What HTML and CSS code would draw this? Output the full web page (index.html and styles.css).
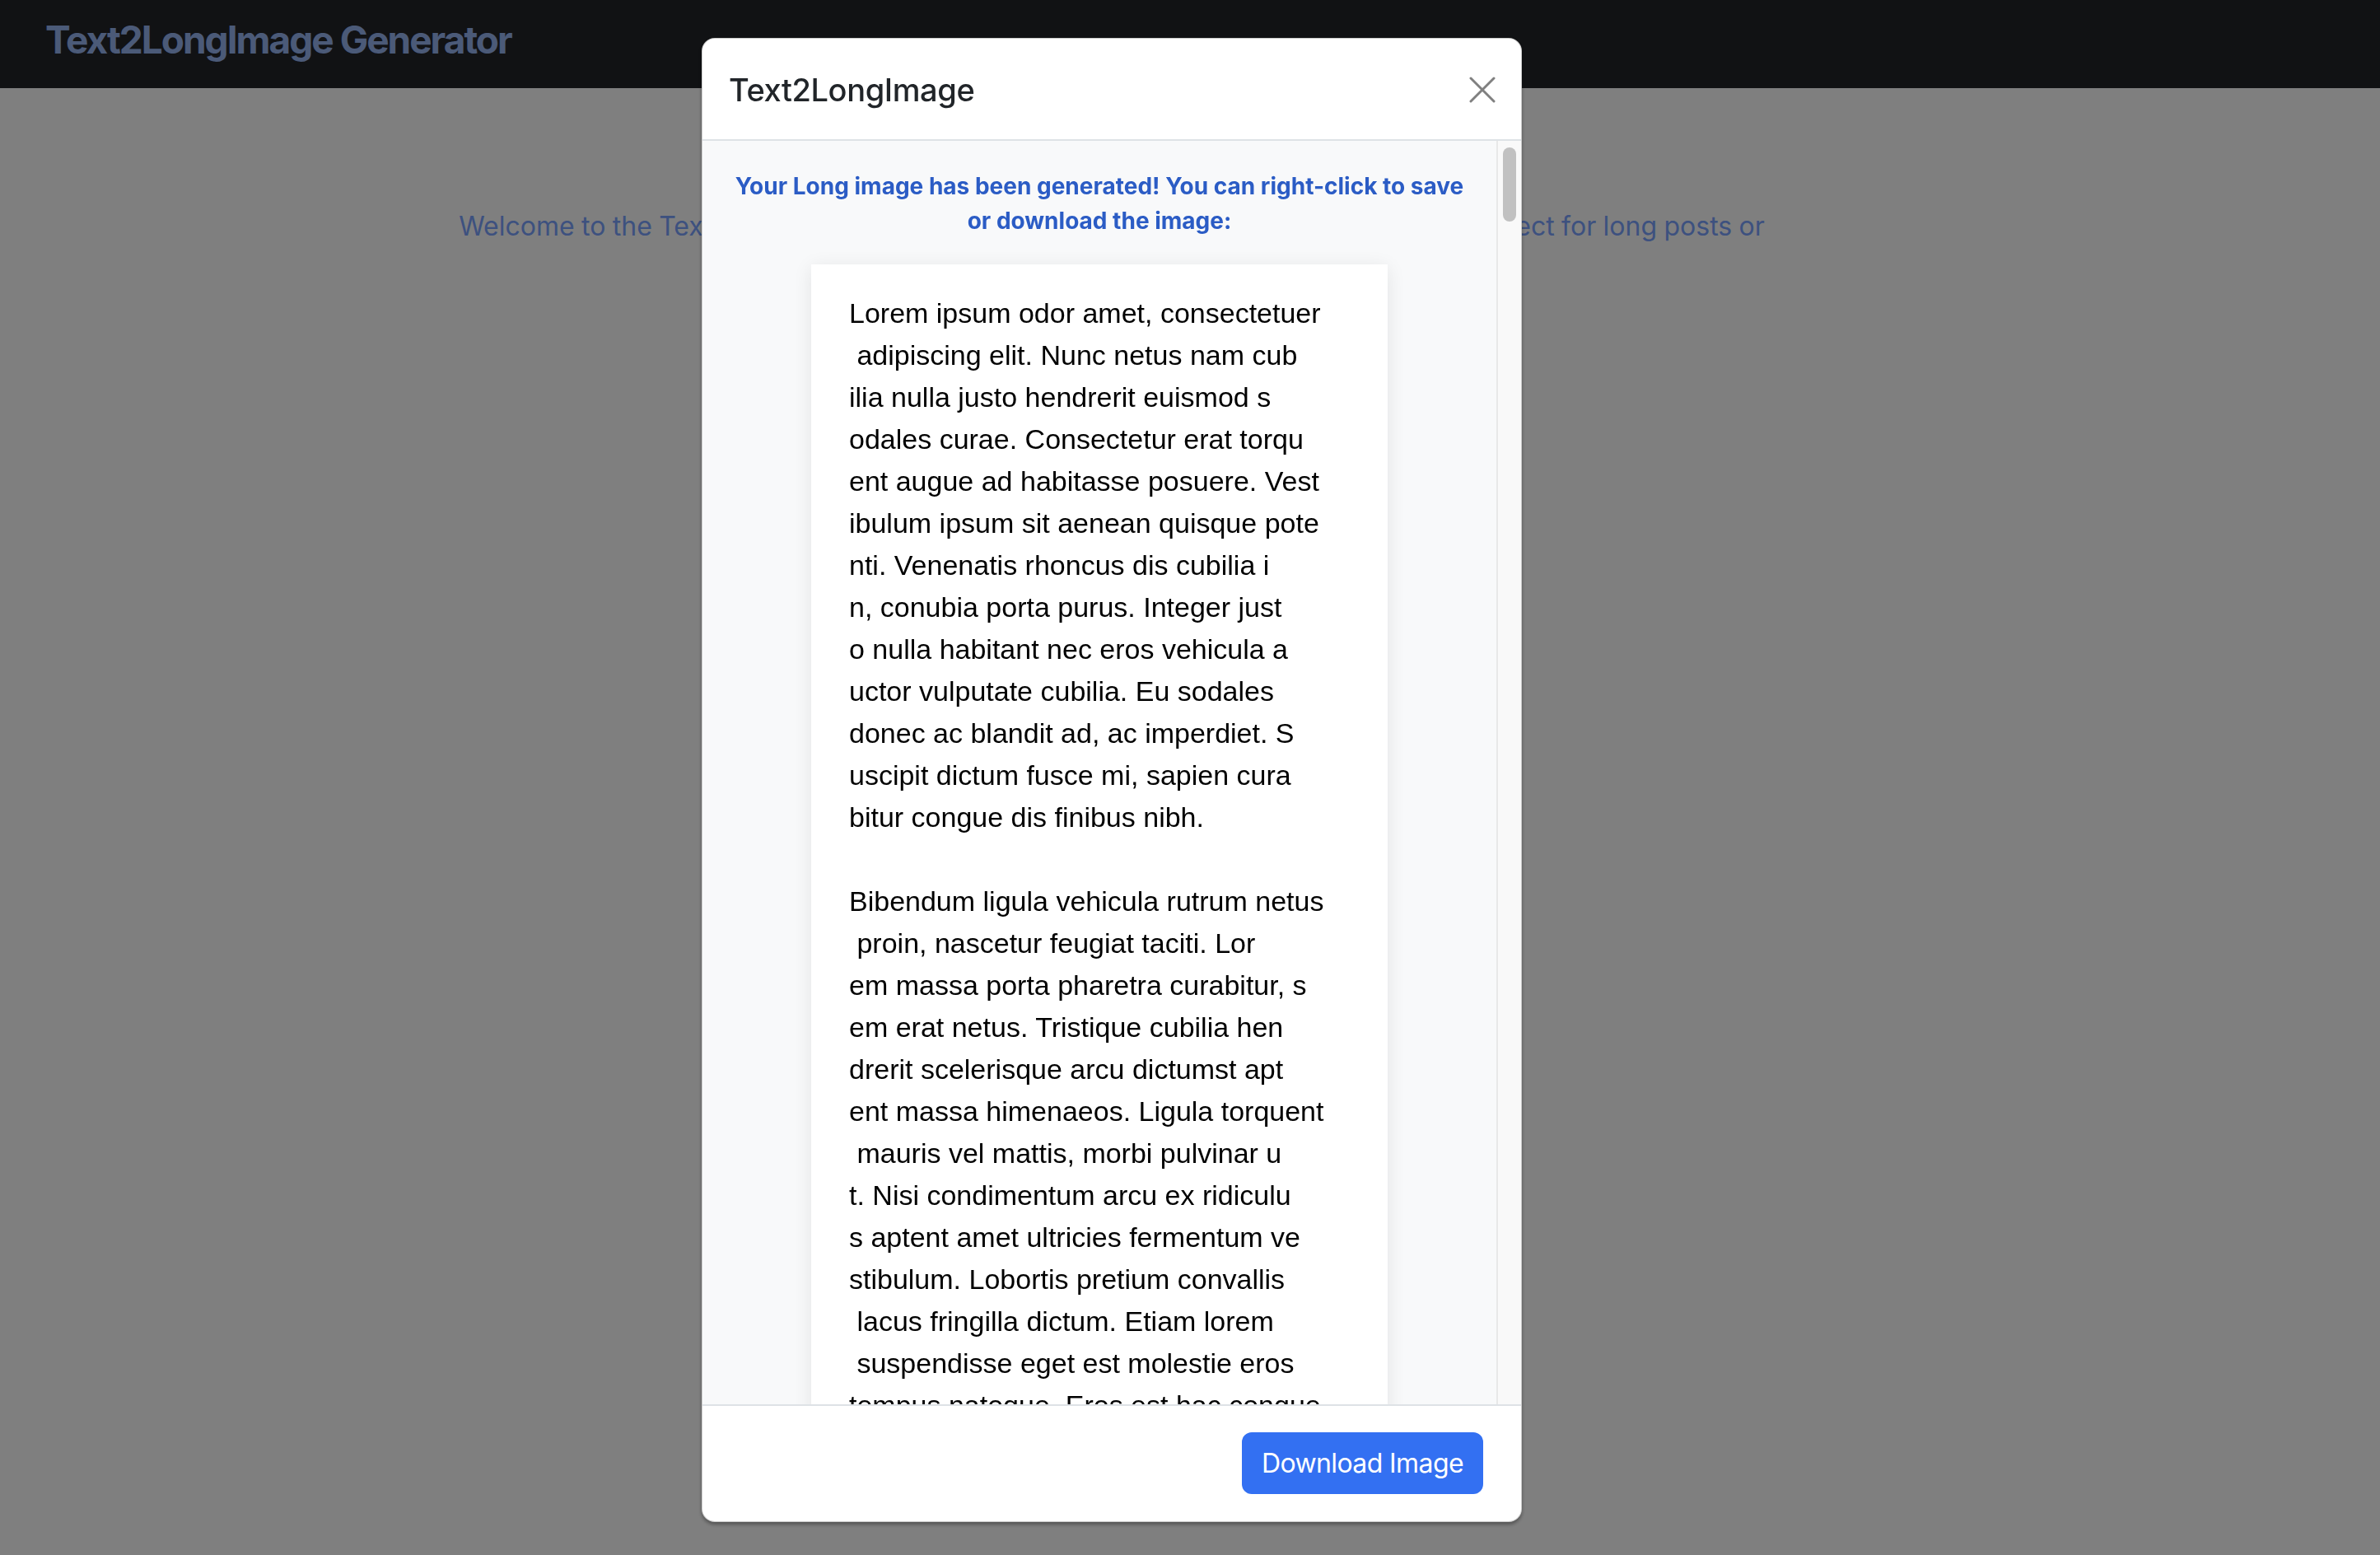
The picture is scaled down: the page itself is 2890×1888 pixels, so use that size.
FILE: index.html
```html
<!DOCTYPE html>
<html lang="en">
<head>
<meta charset="utf-8">
<title>Text2LongImage Generator</title>
<link rel="stylesheet" href="styles.css">
</head>
<body>
<nav class="navbar">
  <span class="brand">Text2LongImage Generator</span>
</nav>
<main class="page">
  <p class="lead">Welcome to the Text2LongImage Generator! Convert any text into one tall image, perfect for long posts or<br>sharing on social media.</p>
</main>
<div class="backdrop"></div>
<div class="modal">
  <div class="modal-dialog">
    <div class="modal-header">
      <h5 class="modal-title">Text2LongImage</h5>
      <button class="btn-close" aria-label="Close">
        <svg viewBox="0 0 32 32" width="32" height="32"><path d="M2 2 L30 30 M30 2 L2 30" stroke="#808080" stroke-width="3" stroke-linecap="round" fill="none"/></svg>
      </button>
    </div>
    <div class="modal-body">
      <div class="body-content">
        <p class="notice">Your Long image has been generated! You can right-click to save or download the image:</p>
        <div class="long-image">
<p class="img-text">Lorem ipsum odor amet, consectetuer
 adipiscing elit. Nunc netus nam cub
ilia nulla justo hendrerit euismod s
odales curae. Consectetur erat torqu
ent augue ad habitasse posuere. Vest
ibulum ipsum sit aenean quisque pote
nti. Venenatis rhoncus dis cubilia i
n, conubia porta purus. Integer just
o nulla habitant nec eros vehicula a
uctor vulputate cubilia. Eu sodales
donec ac blandit ad, ac imperdiet. S
uscipit dictum fusce mi, sapien cura
bitur congue dis finibus nibh.

Bibendum ligula vehicula rutrum netus
 proin, nascetur feugiat taciti. Lor
em massa porta pharetra curabitur, s
em erat netus. Tristique cubilia hen
drerit scelerisque arcu dictumst apt
ent massa himenaeos. Ligula torquent
 mauris vel mattis, morbi pulvinar u
t. Nisi condimentum arcu ex ridiculu
s aptent amet ultricies fermentum ve
stibulum. Lobortis pretium convallis
 lacus fringilla dictum. Etiam lorem
 suspendisse eget est molestie eros
tempus natoque. Eros est hac congue
 diam ultrices primis magna nisl.</p>
        </div>
      </div>
      <div class="scroll-track"><div class="scroll-thumb"></div></div>
    </div>
    <div class="modal-footer">
      <button class="btn-primary">Download Image</button>
    </div>
  </div>
</div>
</body>
</html>
```

FILE: styles.css
```css
* { box-sizing: border-box; }
html, body { margin: 0; padding: 0; }
body {
  background: #ffffff;
  font-family: Inter, "Noto Sans", sans-serif;
  width: 2890px;
  height: 1888px;
  overflow: hidden;
}
.navbar {
  height: 107px;
  background: #222428;
  display: flex;
  align-items: center;
  padding: 0 0 12px 55px;
}
.brand {
  font-family: Inter, sans-serif;
  font-weight: 700;
  font-size: 46px;
  letter-spacing: -2px;
  color: #96b4f0;
}
.page {
  width: 2700px;
  padding-top: 144px;
}
.lead {
  margin: 0;
  text-align: center;
  font-size: 32px;
  line-height: 48px;
  word-spacing: -0.6px;
  color: #7aa2ff;
}
.backdrop {
  position: fixed;
  inset: 0;
  background: rgba(0, 0, 0, 0.5);
}
.modal {
  position: fixed;
  inset: 0;
}
.modal-dialog {
  margin: 46px 0 0 852px;
  width: 996px;
  background: #ffffff;
  border: 1px solid rgba(0, 0, 0, 0.2);
  border-radius: 16px;
  box-shadow: 0 3px 4px rgba(0, 0, 0, 0.35);
  overflow: hidden;
}
.modal-header {
  display: flex;
  align-items: center;
  justify-content: space-between;
  padding: 32px 31px 30px 32px;
  border-bottom: 2px solid #dee2e6;
}
.modal-title {
  margin: 0;
  font-size: 38px;
  line-height: 60px;
  font-weight: 500;
  color: #212529;
  letter-spacing: -0.4px;
}
.btn-close {
  border: 0;
  background: transparent;
  padding: 0;
  width: 32px;
  height: 32px;
  display: flex;
}
.modal-body {
  display: flex;
  height: 1534px;
  background: #f8f9fa;
  overflow: hidden;
}
.body-content {
  flex: 1;
  padding: 34px 32px 0;
}
.notice {
  margin: 0 0 32px;
  text-align: center;
  font-size: 28px;
  line-height: 42px;
  font-weight: 700;
  color: #2b5cc5;
}
.long-image {
  width: 700px;
  margin: 0 auto;
  background: #ffffff;
  box-shadow: 0 4px 22px rgba(0, 0, 0, 0.09);
  padding: 34px 40px 40px 46px;
}
.img-text {
  margin: 0;
  white-space: pre;
  font-family: "Liberation Sans", Arial, sans-serif;
  font-size: 34px;
  line-height: 51px;
  color: #000000;
}
.scroll-track {
  width: 30px;
  border-left: 2px solid #e8e8e8;
  background: #f9f9f9;
  display: flex;
  justify-content: center;
  padding-top: 8px;
}
.scroll-thumb {
  width: 16px;
  height: 90px;
  border-radius: 8px;
  background: #c1c1c1;
}
.modal-footer {
  display: flex;
  justify-content: flex-end;
  padding: 32px 46px 33px;
  border-top: 2px solid #dee2e6;
}
.btn-primary {
  font-family: Inter, sans-serif;
  font-size: 32px;
  line-height: 49px;
  letter-spacing: -0.6px;
  padding: 13px 24px;
  border: 0;
  border-radius: 12px;
  background: #3370f2;
  color: #ffffff;
}
```
